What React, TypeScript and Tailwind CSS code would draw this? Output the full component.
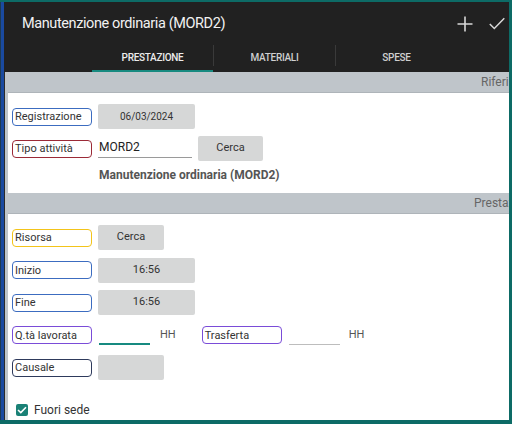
import React from 'react'

const font = { fontFamily: 'Roboto, "Noto Sans", sans-serif' }

function Label({ text, border }: { text: string; border: string }) {
  return (
    <div
      className={`w-[80px] h-[18px] border-[1.5px] rounded-[4px] flex items-center pl-[2px] text-[11px] leading-none text-[#333] ${border}`}
    >
      {text}
    </div>
  )
}

function GrayButton({ text, w, size = 'text-[11px]' }: { text?: string; w: string; size?: string }) {
  return (
    <div
      className={`h-[25px] ${w} ml-[6px] bg-[#d6d7d7] rounded-[2px] flex items-center justify-center ${size} text-[#333]`}
    >
      {text}
    </div>
  )
}

function SectionBar({ text, pl }: { text: string; pl: string }) {
  return (
    <div
      className={`h-[21px] bg-[#bfc5ca] border-b border-[#aeb4b9] overflow-hidden whitespace-nowrap flex items-center ${pl} text-[12px] text-[#666]`}
    >
      {text}
    </div>
  )
}

export default function App() {
  const tabs = ['PRESTAZIONE', 'MATERIALI', 'SPESE']

  return (
    <div className="w-[512px] h-[424px] bg-[#0d6b66] pt-[2px] pr-[3px] pb-[4px] flex overflow-hidden" style={font}>
      <div className="w-[1px] bg-[#1e3a52]" />
      <div className="w-[3px] bg-[#1a4aa0]" />
      <div className="flex-1 flex flex-col min-w-0">
        {/* toolbar */}
        <div className="bg-[#212121] h-[70px] flex flex-col">
          <div className="h-[43px] flex items-center pl-[18px] pr-[4px]">
            <div className="text-[14.5px] tracking-[-0.4px] text-[#f2f2f2] pt-[1px]">
              Manutenzione ordinaria (MORD2)
            </div>
            <div className="ml-auto flex items-center gap-[16px]">
              <svg width="16" height="16" viewBox="0 0 16 16" className="text-[#d8d8d8]">
                <path d="M8 0.5V15.5M0.5 8H15.5" stroke="currentColor" strokeWidth="1.6" fill="none" />
              </svg>
              <svg width="16" height="13" viewBox="0 0 16 13" className="text-[#d8d8d8]">
                <path d="M0.8 7L5.3 11.5L15.3 1.2" stroke="currentColor" strokeWidth="1.5" fill="none" />
              </svg>
            </div>
          </div>
          <div className="flex ml-[88px] h-[27px]">
            {tabs.map((tab, i) => (
              <React.Fragment key={tab}>
                <div className="w-[121px] flex flex-col">
                  <div
                    className={`flex-1 flex items-center justify-center text-[10px] tracking-[-0.3px] font-medium ${
                      i === 0 ? 'text-[#ececec]' : 'text-[#cfcfcf]'
                    }`}
                  >
                    {tab}
                  </div>
                  <div className={`h-[2px] ${i === 0 ? 'bg-[#178a80]' : ''}`} />
                </div>
                {i < 2 && <div className="w-[1px] h-[21px] bg-[#3a3a3a]" />}
              </React.Fragment>
            ))}
          </div>
        </div>

        {/* content */}
        <div className="flex-1 bg-[#bfc5ca] border-l border-[#2a2a2a] pl-[3px] flex flex-col">
          <SectionBar text="Riferimenti" pl="pl-[473px]" />
          <div className="bg-white h-[100px] pl-[4px] pt-[11px] flex flex-col gap-[7px]">
            <div className="h-[25px] flex items-center">
              <Label text="Registrazione" border="border-[#3c6cc0]" />
              <GrayButton text="06/03/2024" w="w-[97px]" size="text-[10px]" />
            </div>
            <div className="h-[25px] flex items-center">
              <Label text="Tipo attività" border="border-[#9b2a37]" />
              <div className="ml-[6px] w-[94px] h-[25px] flex flex-col justify-end">
                <div className="text-[12px] text-[#222] pl-[1px] pb-[1px]">MORD2</div>
                <div className="h-[1px] bg-[#9a9a9a] mb-[3px]" />
              </div>
              <GrayButton text="Cerca" w="w-[65px]" />
            </div>
            <div className="pl-[87px] text-[12px] font-bold text-[#555] leading-none pt-[1px]">
              Manutenzione ordinaria (MORD2)
            </div>
          </div>
          <SectionBar text="Prestazione" pl="pl-[466px]" />
          <div className="bg-white flex-1 pl-[4px] pt-[11px] flex flex-col gap-[7.5px]">
            <div className="h-[25px] flex items-center">
              <Label text="Risorsa" border="border-[#f3c41a]" />
              <GrayButton text="Cerca" w="w-[66px]" />
            </div>
            <div className="h-[25px] flex items-center">
              <Label text="Inizio" border="border-[#3c6cc0]" />
              <GrayButton text="16:56" w="w-[97px]" />
            </div>
            <div className="h-[25px] flex items-center">
              <Label text="Fine" border="border-[#3c6cc0]" />
              <GrayButton text="16:56" w="w-[97px]" />
            </div>
            <div className="h-[25px] flex items-center">
              <Label text="Q.tà lavorata" border="border-[#7a4cd8]" />
              <div className="ml-[7px] w-[51px] h-[25px] flex flex-col justify-end">
                <div className="h-[1.5px] bg-[#178a80] mb-[3px]" />
              </div>
              <div className="ml-[10px] text-[11px] text-[#555]">HH</div>
              <div className="ml-[26px]">
                <Label text="Trasferta" border="border-[#7a4cd8]" />
              </div>
              <div className="ml-[7px] w-[51px] h-[25px] flex flex-col justify-end">
                <div className="h-[1px] bg-[#bdbdbd] mb-[3px]" />
              </div>
              <div className="ml-[9px] text-[11px] text-[#555]">HH</div>
            </div>
            <div className="h-[25px] flex items-center">
              <Label text="Causale" border="border-[#2e3a5c]" />
              <GrayButton w="w-[66px]" />
            </div>
            <div className="flex items-center pl-[4px] pt-[13px]">
              <div className="w-[12px] h-[12px] rounded-[2px] bg-[#1a8176] flex items-center justify-center">
                <svg width="10" height="8" viewBox="0 0 10 8">
                  <path d="M1 4L3.8 6.6L9 1.2" stroke="white" strokeWidth="1.6" fill="none" />
                </svg>
              </div>
              <div className="ml-[6px] text-[12px] text-[#333]">Fuori sede</div>
            </div>
          </div>
        </div>
      </div>
    </div>
  )
}
